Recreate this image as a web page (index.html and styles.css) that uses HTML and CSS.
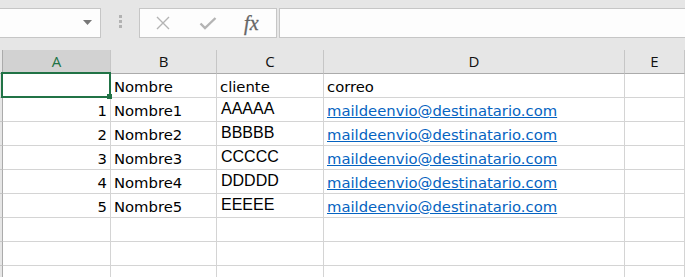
FILE: index.html
```html
<!DOCTYPE html>
<html lang="es">
<head>
    <meta charset="UTF-8">
    <title>Libro1 - Excel</title>
    <link rel="stylesheet" href="styles.css">
</head>
<body>
    <div class="formula-bar">
        <div class="name-box">
            <svg class="drop-arrow" width="9" height="5" viewBox="0 0 9 5"><path d="M0 0h9L4.5 5z" fill="#777"/></svg>
        </div>
        <div class="grip"><span></span><span></span><span></span></div>
        <div class="fx-buttons">
            <svg width="14" height="14" viewBox="0 0 14 14"><path d="M1 1l12 12M13 1L1 13" stroke="#b4b4b4" stroke-width="1.4" fill="none"/></svg>
            <svg width="18" height="13" viewBox="0 0 18 13"><path d="M1.5 6.5l4.5 4.5 10.5-10" stroke="#b4b4b4" stroke-width="2.4" fill="none"/></svg>
            <span class="fx">fx</span>
        </div>
        <div class="formula-input"></div>
    </div>

    <div class="sheet">
        <!-- cabeceras de columna -->
        <div class="row-head top"></div>
        <div class="col-head active">A</div>
        <div class="col-head">B</div>
        <div class="col-head">C</div>
        <div class="col-head">D</div>
        <div class="col-head">E</div>

        <div class="row-head"></div>
        <div class="cell num"></div>
        <div class="cell">Nombre</div>
        <div class="cell">cliente</div>
        <div class="cell">correo</div>
        <div class="cell"></div>

        <div class="row-head"></div>
        <div class="cell num">1</div>
        <div class="cell">Nombre1</div>
        <div class="cell arial">AAAAA</div>
        <div class="cell"><a href="#" class="link">maildeenvio@destinatario.com</a></div>
        <div class="cell"></div>

        <div class="row-head"></div>
        <div class="cell num">2</div>
        <div class="cell">Nombre2</div>
        <div class="cell arial">BBBBB</div>
        <div class="cell"><a href="#" class="link">maildeenvio@destinatario.com</a></div>
        <div class="cell"></div>

        <div class="row-head"></div>
        <div class="cell num">3</div>
        <div class="cell">Nombre3</div>
        <div class="cell arial">CCCCC</div>
        <div class="cell"><a href="#" class="link">maildeenvio@destinatario.com</a></div>
        <div class="cell"></div>

        <div class="row-head"></div>
        <div class="cell num">4</div>
        <div class="cell">Nombre4</div>
        <div class="cell arial">DDDDD</div>
        <div class="cell"><a href="#" class="link">maildeenvio@destinatario.com</a></div>
        <div class="cell"></div>

        <div class="row-head"></div>
        <div class="cell num">5</div>
        <div class="cell">Nombre5</div>
        <div class="cell arial">EEEEE</div>
        <div class="cell"><a href="#" class="link">maildeenvio@destinatario.com</a></div>
        <div class="cell"></div>

        <div class="row-head"></div>
        <div class="cell"></div>
        <div class="cell"></div>
        <div class="cell"></div>
        <div class="cell"></div>
        <div class="cell"></div>

        <div class="row-head"></div>
        <div class="cell"></div>
        <div class="cell"></div>
        <div class="cell"></div>
        <div class="cell"></div>
        <div class="cell"></div>

        <div class="row-head"></div>
        <div class="cell"></div>
        <div class="cell"></div>
        <div class="cell"></div>
        <div class="cell"></div>
        <div class="cell"></div>

        <!-- celda seleccionada A1 -->
        <div class="selection"><span class="handle"></span></div>
    </div>
</body>
</html>
```

FILE: styles.css
```css
body {
    margin: 0;
    background: #e6e6e6;
    height: 277px;
    overflow: hidden;
    font-family: 'DejaVu Sans', sans-serif;
}
/* Barra de formulas */
.formula-bar {
    height: 50px;
    display: flex;
    align-items: flex-start;
    padding-top: 8px;
    box-sizing: border-box;
}
.name-box {
    width: 102px;
    height: 30px;
    margin-left: -1px;
    box-sizing: border-box;
    background: #fdfdfd;
    border: 1px solid #c6c6c6;
    display: flex;
    align-items: center;
    justify-content: flex-end;
    padding-right: 8px;
}
.drop-arrow {
    margin-top: -1px;
}
.grip {
    margin-left: 18px;
    padding-top: 7px;
    display: flex;
    flex-direction: column;
    gap: 2px;
}
.grip span {
    width: 3px;
    height: 3px;
    background: #b2b2b2;
}
.fx-buttons {
    margin-left: 17px;
    width: 138px;
    height: 30px;
    box-sizing: border-box;
    background: #fdfdfd;
    border: 1px solid #c6c6c6;
    display: grid;
    grid-template-columns: 1fr 1fr 1fr;
    justify-items: center;
    align-items: center;
}
.fx {
    font-family: 'Liberation Serif', serif;
    font-style: italic;
    font-size: 20px;
    color: #666;
    margin-left: -4px;
    -webkit-text-stroke: 0.3px #666;
}
.formula-input {
    flex: 1;
    margin-left: 2px;
    margin-right: -2px;
    height: 30px;
    box-sizing: border-box;
    background: #fdfdfd;
    border: 1px solid #c6c6c6;
}
/* Hoja */
.sheet {
    position: relative;
    display: grid;
    grid-template-columns: 3px 108px 106px 107px 301px 1fr;
    grid-auto-rows: 24px;
}
.sheet > div {
    box-sizing: border-box;
}
.row-head {
    background: #e6e6e6;
    border-right: 1px solid #ababab;
    border-bottom: 1px solid #c6c6c6;
}
.row-head.top {
    border-bottom-color: #ababab;
}
.col-head {
    background: #e6e6e6;
    border-right: 1px solid #c6c6c6;
    border-bottom: 1px solid #ababab;
    text-align: center;
    font-family: 'Open Sans', sans-serif;
    font-size: 15px;
    line-height: 23px;
    color: #111;
}
.col-head.active {
    background: #d2d2d2;
    color: #217346;
}
.cell {
    background: #fff;
    border-right: 1px solid #d4d4d4;
    border-bottom: 1px solid #d4d4d4;
    padding: 2px 3px 0 3px;
    font-size: 14.8px;
    line-height: 21px;
    color: #000;
    white-space: nowrap;
    overflow: hidden;
}
.cell.num {
    text-align: right;
    padding-right: 3px;
}
.cell.arial {
    font-family: 'Liberation Sans', sans-serif;
    font-size: 16px;
    padding-top: 0;
    padding-left: 4px;
}
.link {
    color: #0563c1;
    text-decoration: underline;
}
.selection {
    position: absolute;
    left: 1px;
    top: 22px;
    width: 110px;
    height: 26px;
    border: 2px solid #217346;
}
.handle {
    position: absolute;
    right: -3px;
    bottom: -3px;
    width: 5px;
    height: 5px;
    background: #217346;
}
```
